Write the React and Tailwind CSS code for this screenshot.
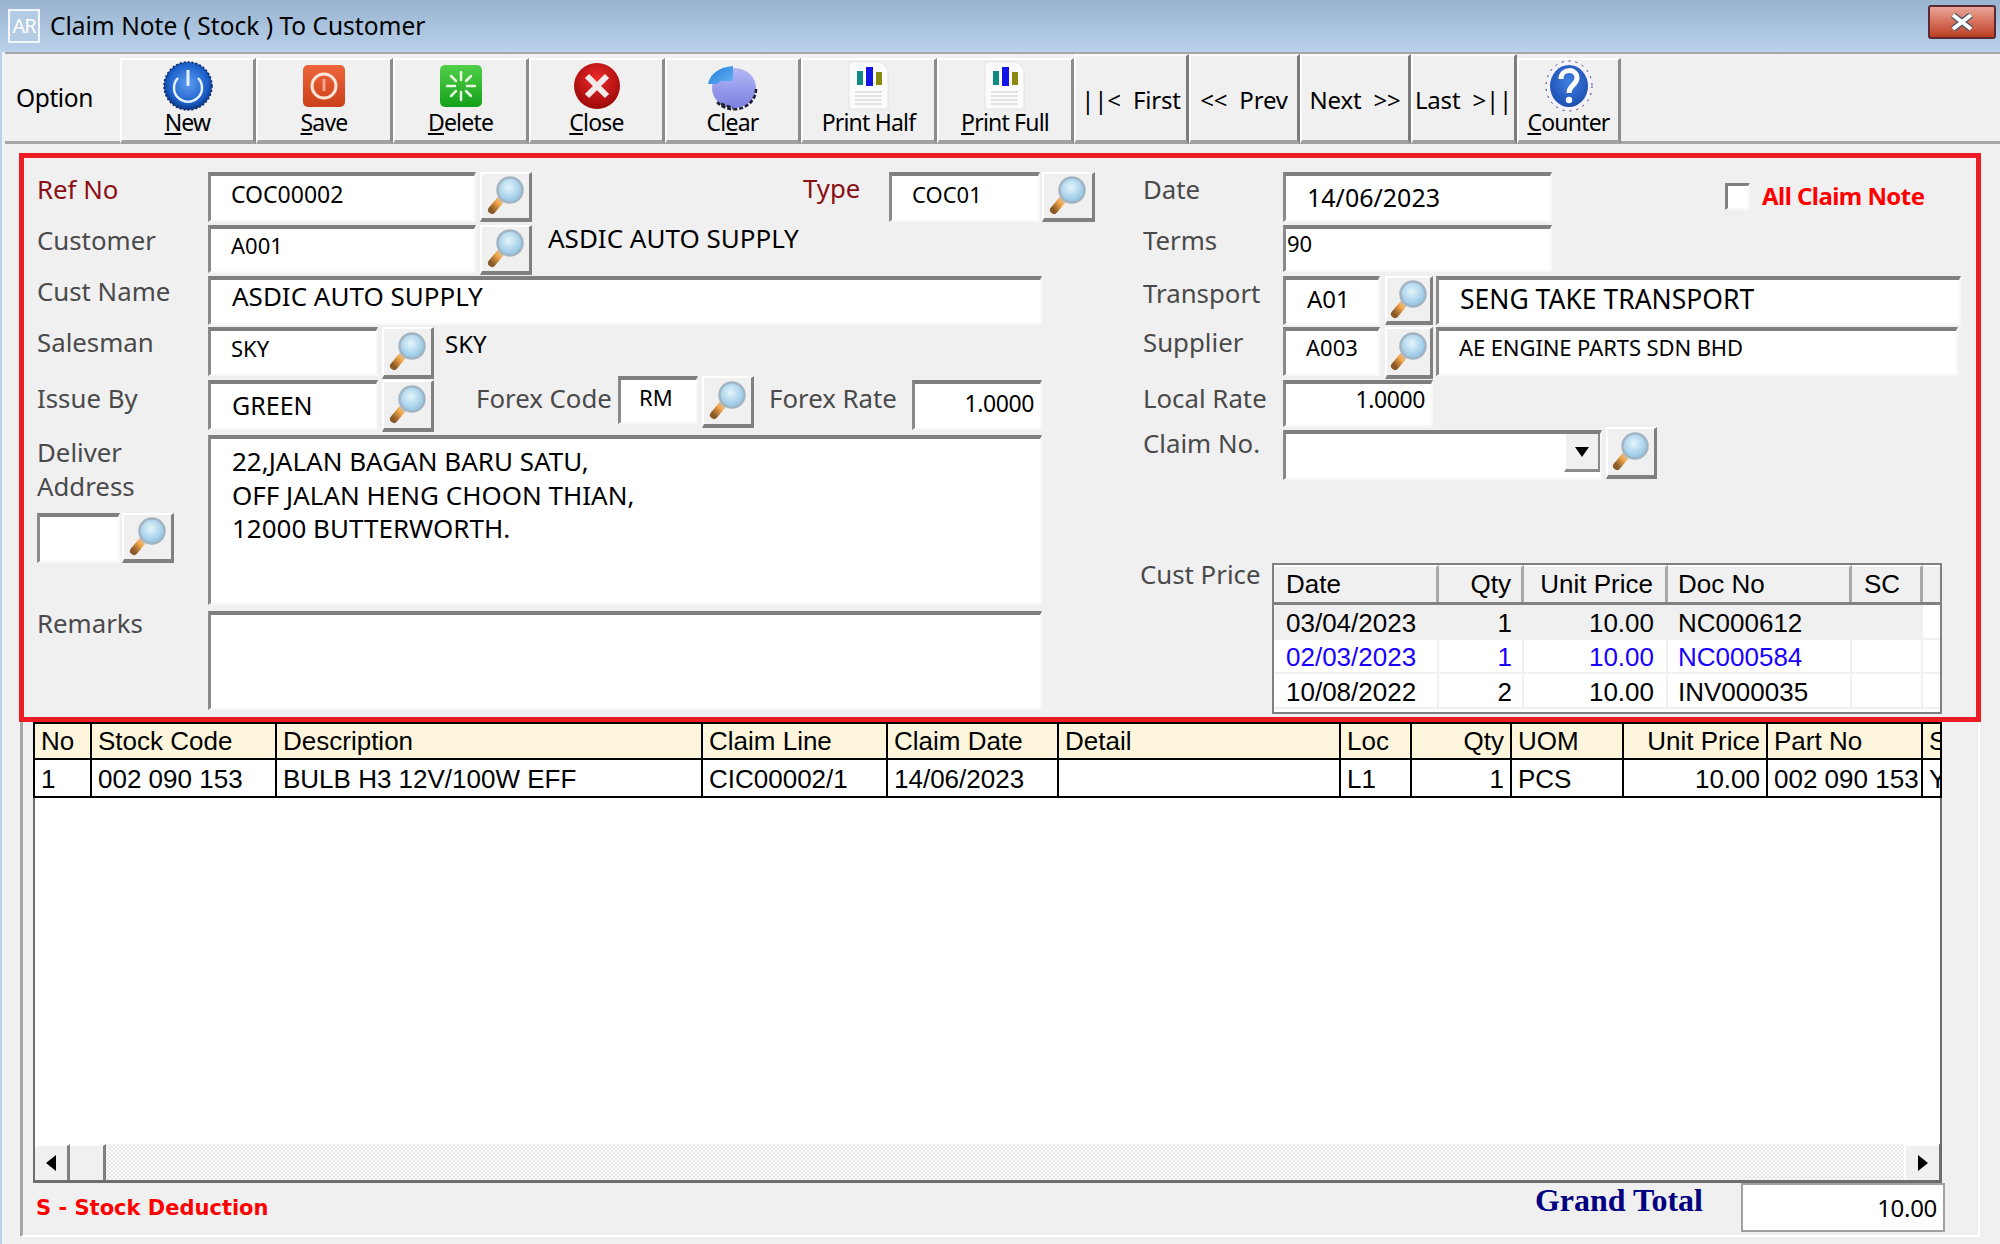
import React from 'react';

const SANS = "font-['Noto_Sans',sans-serif]";

const LINE_COLS = [
  { label: 'No', value: '1', w: 'w-[59px]' },
  { label: 'Stock Code', value: '002 090 153', w: 'w-[185px]' },
  { label: 'Description', value: 'BULB H3 12V/100W EFF', w: 'w-[426px]' },
  { label: 'Claim Line', value: 'CIC00002/1', w: 'w-[185px]' },
  { label: 'Claim Date', value: '14/06/2023', w: 'w-[171px]' },
  { label: 'Detail', value: '', w: 'w-[282px]' },
  { label: 'Loc', value: 'L1', w: 'w-[71px]' },
  { label: 'Qty', value: '1', w: 'w-[100px]', right: true },
  { label: 'UOM', value: 'PCS', w: 'w-[112px]' },
  { label: 'Unit Price', value: '10.00', w: 'w-[144px]', right: true },
  { label: 'Part No', value: '002 090 153', w: 'w-[155px]' },
  { label: 'S', value: 'Y', w: 'w-[19px]' },
];

const PRICE_COLS = [
  { label: 'Date', w: 'w-[165px]', pad: 'pl-[12px]' },
  { label: 'Qty', w: 'w-[85px]', pad: 'justify-end pr-[10px]' },
  { label: 'Unit Price', w: 'w-[144px]', pad: 'justify-end pr-[12px]' },
  { label: 'Doc No', w: 'w-[184px]', pad: 'pl-[10px]' },
  { label: 'SC', w: 'w-[71px]', pad: 'pl-[12px]' },
  { label: '', w: 'flex-1', pad: '' },
];

const PRICE_ROWS = [
  { cells: ['03/04/2023', '1', '10.00', 'NC000612', '', ''], cls: 'text-black', bg: 'bg-[#f0f0f0]' },
  { cells: ['02/03/2023', '1', '10.00', 'NC000584', '', ''], cls: 'text-[#1a00ff]', bg: 'bg-white' },
  { cells: ['10/08/2022', '2', '10.00', 'INV000035', '', ''], cls: 'text-black', bg: 'bg-white' },
];

function Magnifier() {
  return (
    <svg width="40" height="40" viewBox="0 0 40 40">
      <defs>
        <radialGradient id="glass" cx="45%" cy="40%" r="60%">
          <stop offset="0%" stopColor="#e4f5fb" />
          <stop offset="100%" stopColor="#8fc3e4" />
        </radialGradient>
        <linearGradient id="handle" x1="0" y1="1" x2="1" y2="0">
          <stop offset="0%" stopColor="#8a5a28" />
          <stop offset="60%" stopColor="#f5a94a" />
          <stop offset="100%" stopColor="#c9c9c9" />
        </linearGradient>
      </defs>
      <path d="M6 34 L16 22" stroke="url(#handle)" strokeWidth="8" strokeLinecap="round" />
      <circle cx="24" cy="14" r="12.5" fill="url(#glass)" stroke="#a3b4c2" strokeWidth="2.5" />
    </svg>
  );
}

function Lookup({ className }) {
  return (
    <div className={`flex items-center justify-center shrink-0 bg-[#f0f0f0] border-t-2 border-l-2 border-white border-r-[3px] border-b-[4px] border-r-[#808080] border-b-[#808080] ${className}`}>
      <Magnifier />
    </div>
  );
}

function Field({ className = '', children }) {
  return (
    <div className={`flex items-center shrink-0 bg-white border-t-[4px] border-l-[3px] border-t-[#7f7f7f] border-l-[#8a8a8a] border-r-2 border-b-2 border-r-[#f8f8f8] border-b-[#f8f8f8] whitespace-nowrap text-black ${className}`}>
      {children}
    </div>
  );
}

function Label({ className = '', children }) {
  return <div className={`text-[25.8px] leading-[34px] text-[#4a4a4a] whitespace-nowrap shrink-0 ${className}`}>{children}</div>;
}

function ToolButton({ w, icon, children }) {
  return (
    <div className={`${w} shrink-0 h-[86px] flex flex-col items-center bg-[#f0f0f0] border-l-2 border-t-2 border-white border-r-[3px] border-b-[4px] border-r-[#8c8c8c] border-b-[#a0a0a0]`}>
      <div className="h-[52px] flex items-center justify-center">{icon}</div>
      <div className="-mt-1 text-[23px] leading-[28px] tracking-[-0.8px] text-black whitespace-nowrap">{children}</div>
    </div>
  );
}

function NavButton({ w, children }) {
  return (
    <div className={`${w} shrink-0 h-[90px] -mt-1 flex items-center justify-center pt-1 bg-[#f0f0f0] border-l-2 border-t-2 border-white border-r-[3px] border-b-[4px] border-r-[#7c7c7c] border-b-[#a0a0a0] text-[24px] tracking-[-0.2px] text-black whitespace-pre`}>
      {children}
    </div>
  );
}

const PowerIcon = (
  <svg width="52" height="52" viewBox="0 0 52 52">
    <defs>
      <radialGradient id="pw" cx="50%" cy="45%" r="55%">
        <stop offset="0%" stopColor="#5f9df2" />
        <stop offset="75%" stopColor="#1b5fc8" />
        <stop offset="100%" stopColor="#0b3480" />
      </radialGradient>
    </defs>
    <circle cx="26" cy="26" r="24" fill="url(#pw)" stroke="#0d2a66" strokeWidth="1.5" strokeDasharray="2 2" />
    <path d="M16 18 A14 14 0 1 0 36 18" fill="none" stroke="#e6f1ff" strokeWidth="2.5" />
    <path d="M26 10 V26" stroke="#e6f1ff" strokeWidth="3" />
  </svg>
);

const SaveIcon = (
  <svg width="44" height="44" viewBox="0 0 44 44">
    <defs>
      <linearGradient id="sv" x1="0" y1="0" x2="0" y2="1">
        <stop offset="0%" stopColor="#f0663c" />
        <stop offset="100%" stopColor="#c9401a" />
      </linearGradient>
    </defs>
    <rect x="1" y="1" width="42" height="42" rx="5" fill="url(#sv)" />
    <circle cx="22" cy="22" r="12" fill="none" stroke="#fbe4d8" strokeWidth="3" />
    <path d="M22 15 V27" stroke="#f3a78a" strokeWidth="3" />
  </svg>
);

const DeleteIcon = (
  <svg width="44" height="44" viewBox="0 0 44 44">
    <defs>
      <linearGradient id="dl" x1="0" y1="0" x2="0" y2="1">
        <stop offset="0%" stopColor="#52d04a" />
        <stop offset="100%" stopColor="#14a01a" />
      </linearGradient>
    </defs>
    <rect x="1" y="1" width="42" height="42" rx="5" fill="url(#dl)" />
    <path d="M22 8 V16 M22 28 V36 M8 22 H16 M28 22 H36 M12 12 L17 17 M27 27 L32 32 M32 12 L27 17 M17 27 L12 32" stroke="#e8ffe0" strokeWidth="2.5" strokeLinecap="round" />
  </svg>
);

const CloseIcon = (
  <svg width="48" height="48" viewBox="0 0 48 48">
    <defs>
      <radialGradient id="cl" cx="50%" cy="35%" r="65%">
        <stop offset="0%" stopColor="#ee2a2a" />
        <stop offset="100%" stopColor="#9c0808" />
      </radialGradient>
    </defs>
    <circle cx="24" cy="24" r="23" fill="url(#cl)" />
    <path d="M14 14 L34 34 M34 14 L14 34" stroke="#f2eaea" strokeWidth="6" />
  </svg>
);

const ClearIcon = (
  <svg width="52" height="50" viewBox="0 0 52 50">
    <defs>
      <linearGradient id="pie" x1="0" y1="0" x2="0" y2="1">
        <stop offset="0%" stopColor="#b4b7f5" />
        <stop offset="100%" stopColor="#7c80e0" />
      </linearGradient>
      <linearGradient id="slice" x1="0" y1="0" x2="1" y2="1">
        <stop offset="0%" stopColor="#1f7ad6" />
        <stop offset="100%" stopColor="#66b4f4" />
      </linearGradient>
    </defs>
    <ellipse cx="27" cy="27" rx="22" ry="20" fill="url(#pie)" />
    <path d="M49 28 A22 20 0 0 1 10 41 M14 43 L26 47" fill="none" stroke="#1c1c30" strokeWidth="2.5" strokeDasharray="4 2" />
    <path d="M1 23 C3 13 12 6 26 5 L26 20 L14 20 L10 23 Z" fill="url(#slice)" />
  </svg>
);

function PrintIcon({ lines }) {
  return (
    <svg width="44" height="50" viewBox="0 0 44 50">
      <path d="M2 1 H34 L41 8 V48 H2 Z" fill="#fbfbfb" stroke="#e2e2e2" />
      <rect x="10" y="10" width="6" height="14" fill="#0f8a80" />
      <rect x="19" y="6" width="7" height="19" fill="#1414e6" />
      <rect x="29" y="11" width="6" height="13" fill="#8a8a10" />
      <path d={lines} stroke="#dadada" strokeWidth="1.5" />
    </svg>
  );
}

const CounterIcon = (
  <svg width="50" height="52" viewBox="0 0 50 52">
    <defs>
      <radialGradient id="ct" cx="50%" cy="40%" r="60%">
        <stop offset="0%" stopColor="#3f7fe0" />
        <stop offset="100%" stopColor="#1d4fb0" />
      </radialGradient>
    </defs>
    <ellipse cx="25" cy="26" rx="23" ry="25" fill="#f4f2fb" stroke="#3a2a70" strokeDasharray="2 5" />
    <ellipse cx="25" cy="26" rx="19" ry="21" fill="url(#ct)" />
    <path d="M17 19 C17 8 33 8 33 18 C33 25 25 25 25 33" fill="none" stroke="#fff" strokeWidth="5" />
    <circle cx="25" cy="40" r="3.2" fill="#fff" />
  </svg>
);

const LINES = 'M8 31 H35 M8 35 H35 M8 39 H35 M8 43 H35';

export default function App() {
  return (
    <div className={`w-[2000px] h-[1244px] overflow-hidden bg-[#f0f0f0] flex flex-col ${SANS}`}>
      {/* Title bar */}
      <div className="h-[52px] shrink-0 flex items-center pl-2 pr-1 bg-gradient-to-b from-[#99b4d1] to-[#b9d1ea]">
        <div className="w-[32px] h-[34px] border-2 border-[#f2f6fb] bg-[#b4cbe4] flex items-center justify-center text-[20px] tracking-[-1px] text-white">AR</div>
        <div className="ml-[10px] text-[24.5px] text-black whitespace-nowrap">Claim Note ( Stock ) To Customer</div>
        <div className="ml-auto w-[68px] h-[34px] -mt-2 rounded-[3px] border-2 border-[#5a2a34] bg-gradient-to-b from-[#e8a49a] via-[#d5705c] to-[#bb3d22] flex items-center justify-center">
          <svg width="28" height="18" viewBox="0 0 28 18">
            <path d="M5 2 L23 16 M23 2 L5 16" stroke="#4a5668" strokeWidth="6.5" />
            <path d="M5 2 L23 16 M23 2 L5 16" stroke="#fff" strokeWidth="4" />
          </svg>
        </div>
      </div>

      <div className="flex-1 flex flex-col border-l-2 border-[#b9d1ea]">
        {/* Toolbar */}
        <div className="h-[92px] shrink-0 ml-[3px] flex items-start pt-1 border-t-2 border-[#a6a6a6] border-b-[3px] border-b-[#a6a6a6]">
          <div className="w-[115px] h-[80px] flex items-center pl-[11px] text-[24.5px] tracking-[-0.4px] text-black shrink-0">Option</div>
          <ToolButton w="w-[136px]" icon={PowerIcon}><u className="underline">N</u>ew</ToolButton>
          <ToolButton w="w-[137px]" icon={SaveIcon}><u className="underline">S</u>ave</ToolButton>
          <ToolButton w="w-[136px]" icon={DeleteIcon}><u className="underline">D</u>elete</ToolButton>
          <ToolButton w="w-[136px]" icon={CloseIcon}><u className="underline">C</u>lose</ToolButton>
          <ToolButton w="w-[136px]" icon={ClearIcon}>Cl<u className="underline">e</u>ar</ToolButton>
          <ToolButton w="w-[136px]" icon={<PrintIcon lines={LINES} />}>Print Half</ToolButton>
          <ToolButton w="w-[137px]" icon={<PrintIcon lines={LINES} />}><u className="underline">P</u>rint Full</ToolButton>
          <NavButton w="w-[115px]">{'||<  First'}</NavButton>
          <NavButton w="w-[111px]">{'<<  Prev'}</NavButton>
          <NavButton w="w-[111px]">{'Next  >>'}</NavButton>
          <NavButton w="w-[106px]">{'Last  >||'}</NavButton>
          <ToolButton w="w-[104px]" icon={CounterIcon}><u className="underline">C</u>ounter</ToolButton>
        </div>

        {/* Red framed header form */}
        <div className="ml-[17px] mt-[9px] w-[1962px] h-[569px] shrink-0 border-[5px] border-[#ed1c24] flex pl-[13px] pt-[14px]">
          {/* Left column */}
          <div className="w-[1008px] shrink-0 flex flex-col">
            <div className="h-[53px] flex items-start">
              <Label className="w-[171px] text-[#8b0f14]">Ref No</Label>
              <Field className="w-[268px] h-[50px] pl-[20px] pb-[8px] text-[23px]">COC00002</Field>
              <Lookup className="ml-1 w-[52px] h-[50px]" />
              <Label className="ml-[271px] w-[86px] -mt-[1px] text-[#8b0f14]">Type</Label>
              <Field className="w-[151px] h-[50px] pl-[20px] pb-[8px] text-[22px]">COC01</Field>
              <Lookup className="ml-[2px] w-[53px] h-[50px]" />
            </div>
            <div className="h-[51px] flex items-start">
              <Label className="w-[171px] -mt-[2px]">Customer</Label>
              <Field className="w-[268px] h-[48px] pl-[20px] pb-[10px] text-[22px]">A001</Field>
              <Lookup className="ml-1 w-[52px] h-[50px]" />
              <div className="ml-4 text-[26px] leading-[26px] text-black whitespace-nowrap">ASDIC AUTO SUPPLY</div>
            </div>
            <div className="h-[51px] flex items-start">
              <Label className="w-[171px] -mt-[2px]">Cust Name</Label>
              <Field className="w-[834px] h-[49px] pl-[21px] pb-[10px] text-[26px]">ASDIC AUTO SUPPLY</Field>
            </div>
            <div className="h-[53px] flex items-start">
              <Label className="w-[171px] -mt-[2px]">Salesman</Label>
              <Field className="w-[170px] h-[49px] pl-[20px] pb-[8px] text-[22px]">SKY</Field>
              <Lookup className="ml-1 w-[52px] h-[52px]" />
              <div className="ml-[11px] text-[24px] leading-[34px] text-black">SKY</div>
            </div>
            <div className="h-[55px] flex items-start">
              <Label className="w-[171px] pt-[1px]">Issue By</Label>
              <Field className="w-[170px] h-[50px] pl-[21px] text-[25px]">GREEN</Field>
              <Lookup className="ml-1 w-[52px] h-[52px]" />
              <Label className="ml-[42px] w-[142px] pt-[1px]">Forex Code</Label>
              <Field className="w-[80px] h-[48px] -mt-1 pl-[18px] pb-[8px] text-[22px]">RM</Field>
              <Lookup className="ml-1 -mt-1 w-[52px] h-[52px]" />
              <Label className="ml-[15px] w-[143px] pt-[1px]">Forex Rate</Label>
              <Field className="w-[130px] h-[50px] justify-end pr-[6px] pb-[5px] text-[23px] tracking-[-0.4px]">1.0000</Field>
            </div>
            <div className="h-[176px] flex items-start">
              <div className="w-[171px] shrink-0 flex flex-col">
                <Label>Deliver<br />Address</Label>
                <div className="flex mt-[10px]">
                  <Field className="w-[83px] h-[50px]" />
                  <Lookup className="ml-[2px] w-[52px] h-[50px]" />
                </div>
              </div>
              <Field className="w-[834px] h-[170px] items-start pl-[21px] pt-[6px] text-[26px] leading-[33.5px]">
                <div>22,JALAN BAGAN BARU SATU,<br />OFF JALAN HENG CHOON THIAN,<br />12000 BUTTERWORTH.</div>
              </Field>
            </div>
            <div className="flex items-start">
              <Label className="w-[171px] -mt-[5px]">Remarks</Label>
              <Field className="w-[834px] h-[99px]" />
            </div>
          </div>

          {/* Right column */}
          <div className="ml-[98px] flex-1 flex flex-col">
            <div className="h-[53px] flex items-start">
              <Label className="w-[140px]">Date</Label>
              <Field className="w-[269px] h-[50px] pl-[21px] text-[25px]">14/06/2023</Field>
              <div className="ml-[173px] mt-[11px] w-[25px] h-[27px] bg-white border-t-[3px] border-l-[3px] border-[#808080] border-r-2 border-b-2 border-r-[#f8f8f8] border-b-[#f8f8f8]" />
              <div className="ml-3 mt-[8px] text-[24px] leading-[32px] tracking-[-0.55px] font-bold text-[#ff0000] whitespace-nowrap">All Claim Note</div>
            </div>
            <div className="h-[51px] flex items-start">
              <Label className="w-[140px] -mt-[2px]">Terms</Label>
              <Field className="w-[269px] h-[47px] text-[22px] pl-[1px] pb-[12px]">90</Field>
            </div>
            <div className="h-[51px] flex items-start">
              <Label className="w-[140px]">Transport</Label>
              <Field className="w-[97px] h-[49px] pl-[21px] pb-[5px] text-[24px]">A01</Field>
              <Lookup className="ml-[5px] w-[48px] h-[49px]" />
              <Field className="ml-[3px] w-[525px] h-[49px] pl-[21px] pb-[3px] text-[26.5px]">SENG TAKE TRANSPORT</Field>
            </div>
            <div className="h-[53px] flex items-start">
              <Label className="w-[140px] -mt-[2px]">Supplier</Label>
              <Field className="w-[97px] h-[49px] pl-[20px] pb-[10px] text-[22px]">A003</Field>
              <Lookup className="ml-[5px] w-[48px] h-[52px]" />
              <Field className="ml-[3px] w-[522px] h-[49px] pl-[20px] pb-[10px] text-[22px] tracking-[-0.1px]">AE ENGINE PARTS SDN BHD</Field>
            </div>
            <div className="h-[50px] flex items-start">
              <Label className="w-[140px] pt-[1px]">Local Rate</Label>
              <Field className="w-[150px] h-[47px] justify-end pr-[6px] pb-[10px] text-[23px] tracking-[-0.4px]">1.0000</Field>
            </div>
            <div className="h-[50px] flex items-start">
              <Label className="w-[140px] -mt-[4px]">Claim No.</Label>
              <Field className="w-[319px] h-[50px] justify-end items-start">
                <div className="w-[36px] h-[38px] flex items-center justify-center bg-[#f0f0f0] border-l-2 border-white border-r-2 border-b-[3px] border-r-[#8a8a8a] border-b-[#8a8a8a]">
                  <svg width="14" height="10" viewBox="0 0 14 10"><path d="M0 0 H14 L7 10 Z" fill="#000" /></svg>
                </div>
              </Field>
              <Lookup className="ml-[4px] -mt-[3px] w-[51px] h-[52px]" />
            </div>
            <div className="mt-[83px] flex items-start -ml-[3px]">
              <Label className="w-[132px] -mt-[6px]">Cust Price</Label>
              <div className="w-[670px] h-[151px] flex flex-col border-2 border-[#808080] bg-white font-['Liberation_Sans',sans-serif] text-[26px] text-black">
                <div className="h-[40px] flex shrink-0 border-b-[3px] border-[#808080] bg-[#f0f0f0]">
                  {PRICE_COLS.map((c, i) => (
                    <div key={c.label} className={`${c.w} shrink-0 h-full flex items-center border-t-2 border-t-white ${i < 5 ? 'border-r-[3px] border-r-[#a8a8a8]' : ''} ${c.pad}`}>
                      {c.label}
                    </div>
                  ))}
                </div>
                {PRICE_ROWS.map((row) => (
                  <div key={row.cells[0]} className={`h-[34.5px] flex shrink-0 border-b-2 border-[#f0f0f0] ${row.cls}`}>
                    {PRICE_COLS.map((c, i) => (
                      <div key={c.label} className={`${c.w} shrink-0 h-full flex items-center pt-[4px] ${i < 5 ? `border-r-2 border-[#f0f0f0] ${row.bg}` : 'bg-white'} ${c.pad}`}>
                        {row.cells[i]}
                      </div>
                    ))}
                  </div>
                ))}
              </div>
            </div>
          </div>
        </div>

        {/* Detail lines */}
        <div className="ml-[18px] w-[1960px] h-[515px] shrink-0 border-l-[3px] border-l-[#a6a6a6] border-r-2 border-r-white border-b-2 border-b-white flex flex-col">
          <div className="ml-[10px] w-[1909px] h-[461px] shrink-0 flex flex-col bg-white overflow-hidden font-['Liberation_Sans',sans-serif] text-[26px] text-black border-b-[3px] border-[#6e6e6e]">
            <div className="h-[38px] flex shrink-0 bg-[#fdf6dc] border-y-2 border-black">
              {LINE_COLS.map((c, i) => (
                <div key={c.label} className={`${c.w} shrink-0 h-full flex items-center overflow-hidden whitespace-nowrap px-[6px] border-r-2 border-black ${i === 0 ? 'border-l-2 border-l-black' : ''} ${c.right ? 'justify-end px-[4px]' : ''} ${i === LINE_COLS.length - 1 ? 'border-r-0' : ''}`}>
                  {c.label}
                </div>
              ))}
            </div>
            <div className="h-[38px] flex shrink-0 border-b-2 border-black">
              {LINE_COLS.map((c, i) => (
                <div key={c.label} className={`${c.w} shrink-0 h-full flex items-center overflow-hidden whitespace-nowrap px-[6px] pt-[2px] border-r-2 border-black ${i === 0 ? 'border-l-2 border-l-black' : ''} ${c.right ? 'justify-end px-[4px]' : ''} ${i === LINE_COLS.length - 1 ? 'border-r-0' : ''}`}>
                  {c.value}
                </div>
              ))}
            </div>
            <div className="flex-1 border-x-2 border-[#6e6e6e]" />
            <div className="h-[36px] shrink-0 flex border-l-2 border-r-[3px] border-[#6e6e6e] bg-[repeating-conic-gradient(#e6e6e6_0_25%,#ffffff_0_50%)] bg-[length:4px_4px]">
              <div className="w-[35px] flex items-center justify-center bg-[#f0f0f0] border-r-[3px] border-[#808080] border-t-2 border-t-white">
                <svg width="10" height="16" viewBox="0 0 10 16"><path d="M10 0 V16 L0 8 Z" fill="#000" /></svg>
              </div>
              <div className="w-[36px] bg-[#f0f0f0] border-r-[3px] border-[#808080] border-t-2 border-t-white" />
              <div className="ml-auto w-[35px] flex items-center justify-center bg-[#f0f0f0] border-l-2 border-l-white border-t-2 border-t-white">
                <svg width="10" height="16" viewBox="0 0 10 16"><path d="M0 0 V16 L10 8 Z" fill="#000" /></svg>
              </div>
            </div>
          </div>
          <div className="flex items-start">
            <div className="ml-[13px] mt-[10px] font-['DejaVu_Sans',sans-serif] text-[21px] leading-[30px] font-bold text-[#ff0000] whitespace-nowrap">S - Stock Deduction</div>
            <div className="ml-auto font-['Liberation_Serif',serif] text-[32px] leading-[34px] font-bold text-[#000080] whitespace-nowrap">Grand Total</div>
            <div className="ml-[38px] mr-[33px] w-[204px] h-[49px] flex items-center justify-end pr-[6px] bg-white border-2 border-[#a0a0a0] text-[24px] tracking-[-0.3px] text-black">10.00</div>
          </div>
        </div>
      </div>
    </div>
  );
}
